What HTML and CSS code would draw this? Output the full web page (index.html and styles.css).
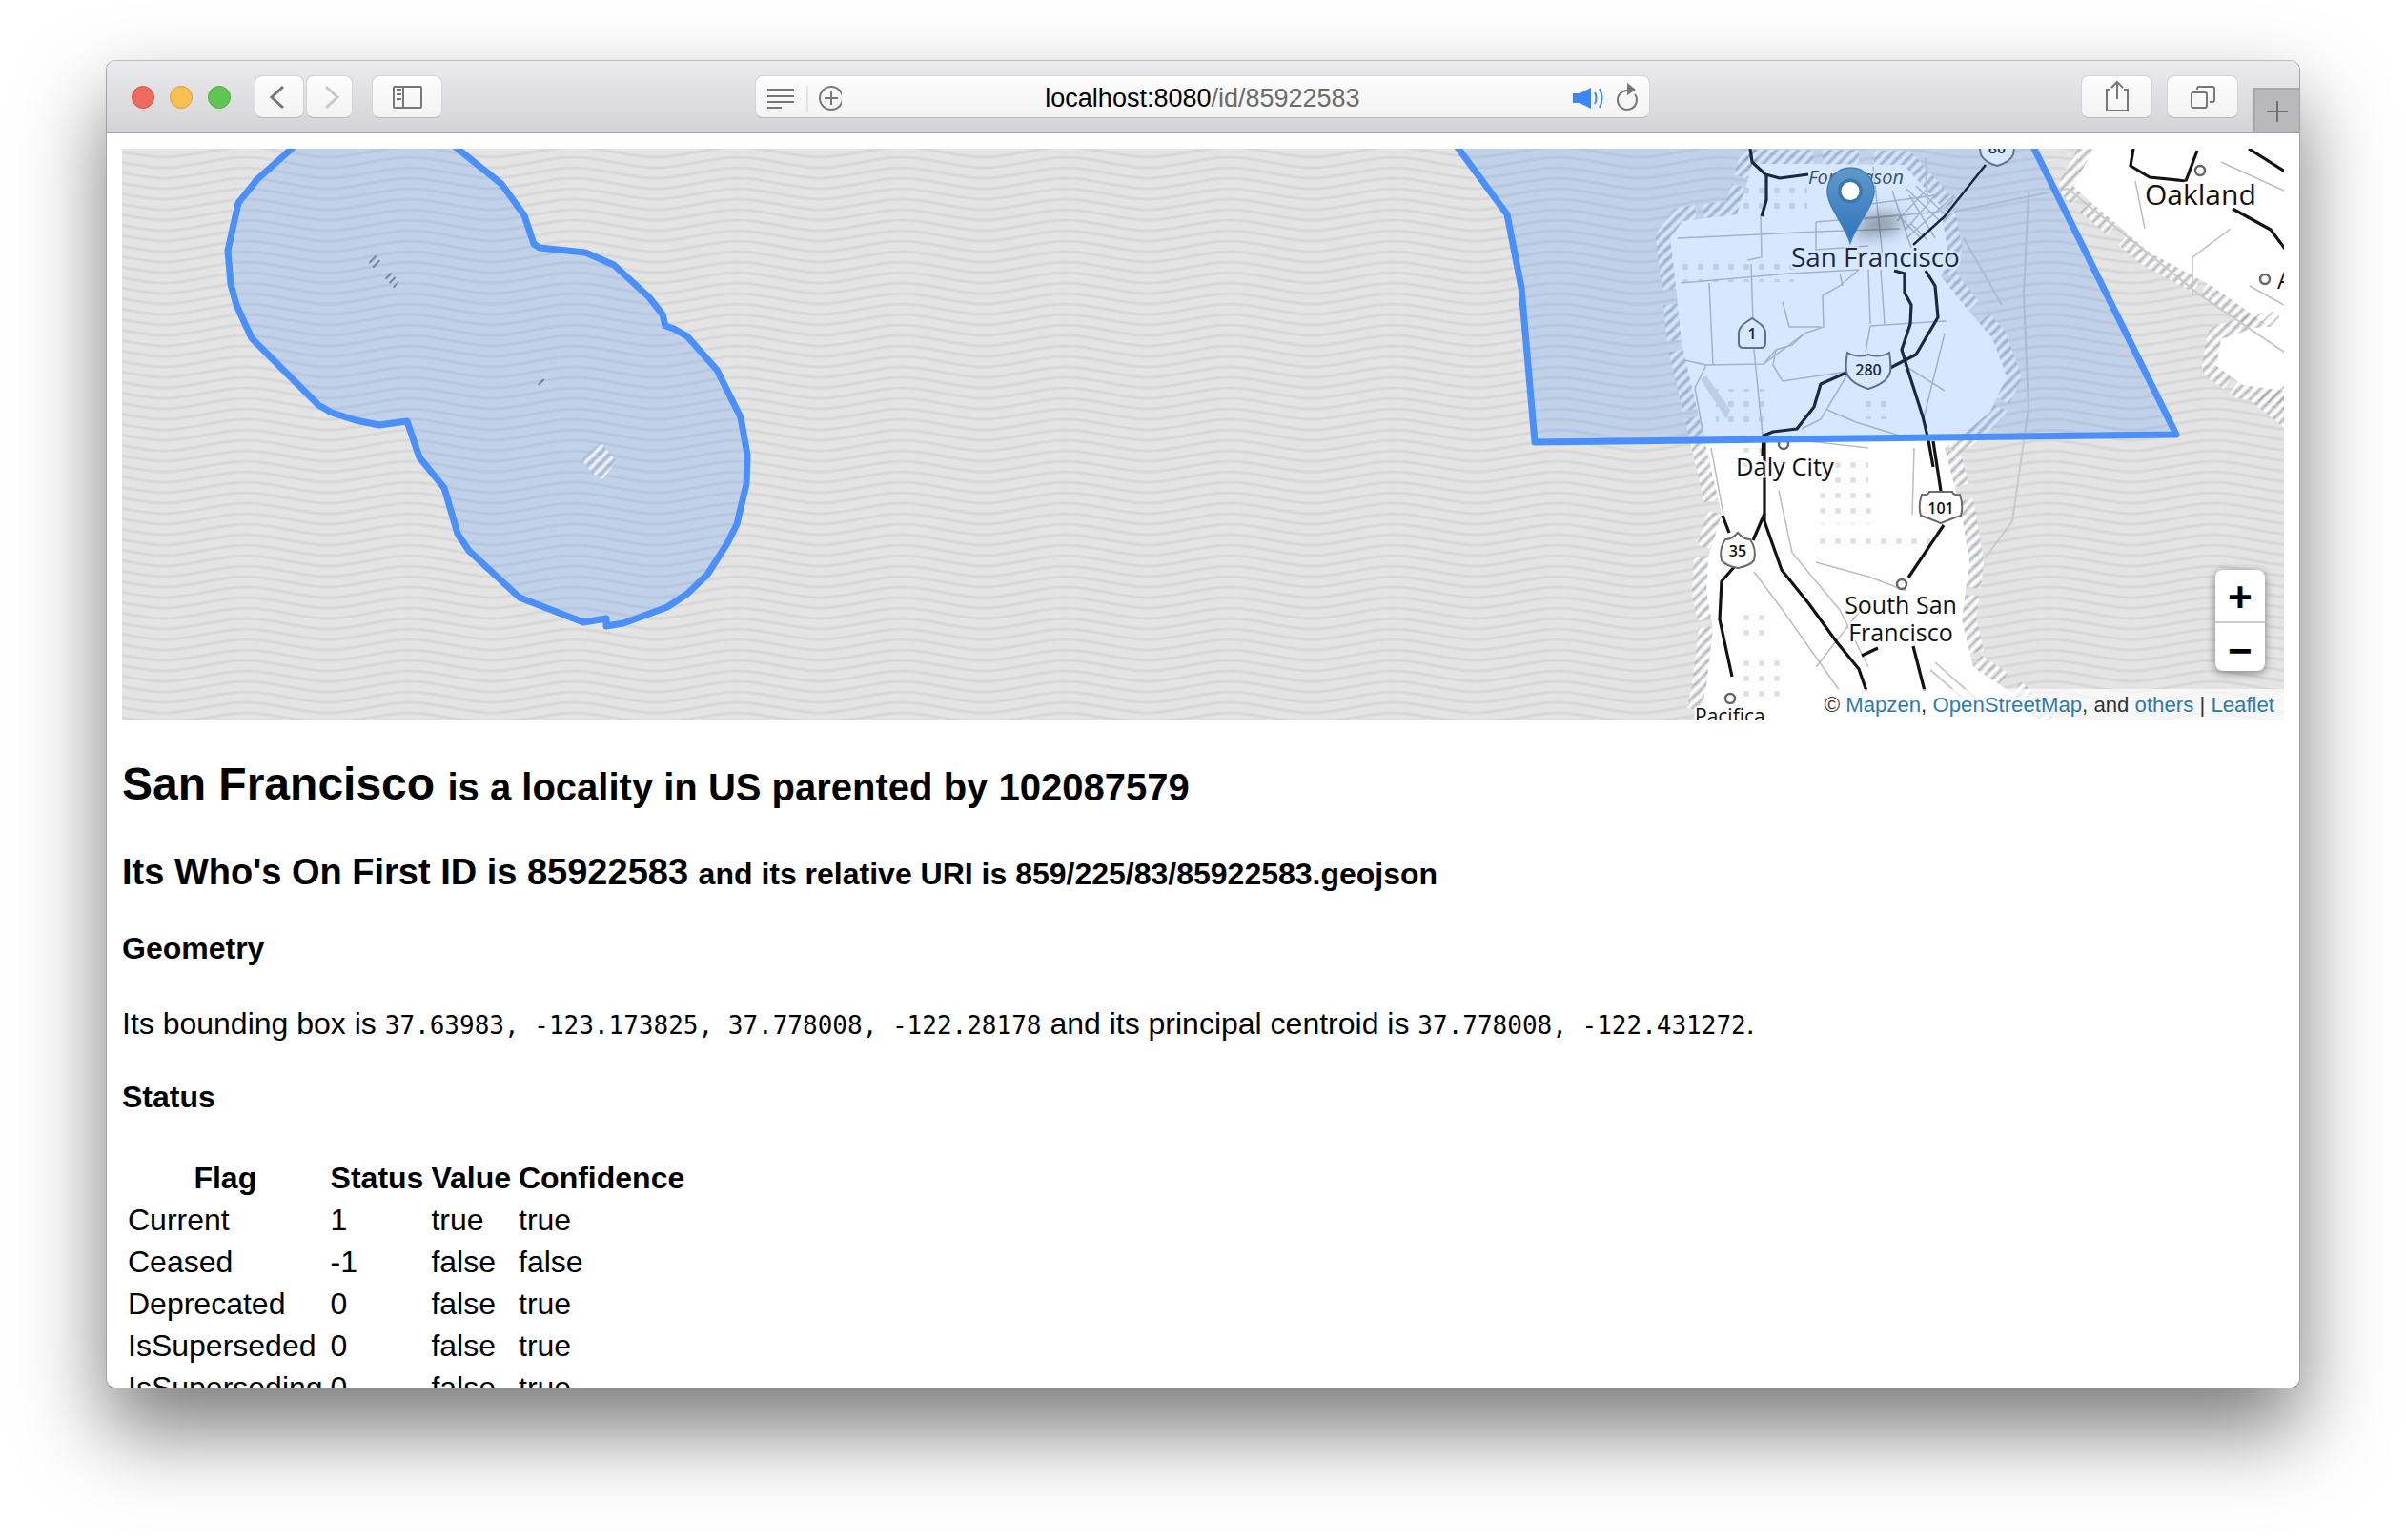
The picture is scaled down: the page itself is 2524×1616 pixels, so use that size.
FILE: index.html
```html
<!DOCTYPE html>
<html lang="en">
<head>
<meta charset="utf-8">
<title>San Francisco</title>
<link rel="stylesheet" href="styles.css">
</head>
<body>
<div class="window">
  <header class="toolbar">
    <div class="lights"><span class="light red"></span><span class="light yellow"></span><span class="light green"></span></div>
    <div class="btn btn-back"><svg width="50" height="43" viewBox="0 0 50 43"><path class="ic-dark" d="M29 11 L17 22 L29 33"/></svg></div>
    <div class="btn btn-forward"><svg width="47" height="43" viewBox="0 0 47 43"><path class="ic-light" d="M20 11 L32 22 L20 33"/></svg></div>
    <div class="btn btn-sidebar"><svg width="72" height="43" viewBox="0 0 72 43"><rect class="ic-thin" x="22" y="11" width="29" height="22" rx="1"/><path class="ic-thin" d="M32 11 V33"/><path class="ic-thin" d="M25 14 H30 M25 19 H30 M25 24 H30"/></svg></div>
    <div class="urlbar">
      <div class="url-left"><svg width="90" height="43" viewBox="0 0 90 43"><path class="ic-thin" d="M12 13 H40 M12 20 H40 M12 26 H40 M12 32 H27"/><path class="ic-sep" d="M54 9 V37"/><circle class="ic-thin" cx="79" cy="22" r="12"/><path class="ic-thin" d="M79 15 V29 M72 22 H86"/></svg></div>
      <div class="url-text"><span class="url-host">localhost:8080</span><span class="url-path">/id/85922583</span></div>
      <div class="url-right"><svg width="90" height="43" viewBox="0 0 90 43"><path class="ic-blue" d="M10 17 H17 L29 11 V33 L17 27 H10 Z"/><path class="ic-wave" d="M33 16 Q36 22 33 28 M38 12 Q43 22 38 32"/><path class="ic-thin" d="M68 14 A10 10 0 1 0 75 18"/><path class="ic-fill" d="M67 6 L76 13 L67 19 Z"/></svg></div>
    </div>
    <div class="btn btn-share"><svg width="73" height="43" viewBox="0 0 73 43"><path class="ic-thin" d="M30 14 H26 V36 H48 V14 H44"/><path class="ic-thin" d="M37 6 V24 M31 12 L37 6 L43 12"/></svg></div>
    <div class="btn btn-tabs"><svg width="73" height="43" viewBox="0 0 73 43"><rect class="ic-thin" x="25" y="17" width="16" height="16" rx="2"/><path class="ic-thin" d="M31 14 V13 Q31 11 33 11 H47 Q49 11 49 13 V25 Q49 27 47 27 H44"/></svg></div>
    <div class="newtab"><svg width="47" height="45" viewBox="0 0 47 45"><path class="ic-plus" d="M23 12 V34 M12 23 H34"/></svg></div>
  </header>

  <main class="page">
    <div class="map">
      <svg class="map-svg" viewBox="128 156 2268 600" width="2268" height="600" role="img" aria-label="Map of San Francisco">
        <defs>
          <pattern id="waves" patternUnits="userSpaceOnUse" width="172" height="11">
            <rect width="172" height="11" fill="#e4e4e4"/>
            <path id="w" class="wave" d="M0 0 C28 0 58 -11 86 -11 S144 0 172 0"/>
            <use href="#w" y="11"/>
            <use href="#w" y="22"/>
          </pattern>
          <pattern id="hatch" patternUnits="userSpaceOnUse" width="8" height="8" patternTransform="rotate(45)">
            <rect width="2.600" height="8" fill="#fff"/>
            <rect x="4.500" width="1.600" height="8" fill="#8f959e" opacity=".6"/>
          </pattern>
          <pattern id="hatchDark" patternUnits="userSpaceOnUse" width="6" height="6" patternTransform="rotate(45)">
            <rect width="2" height="6" fill="#5e6a7c"/>
          </pattern>
          <pattern id="dots" patternUnits="userSpaceOnUse" width="16" height="16">
            <circle cx="8" cy="8" r="3.200" fill="#e0e0e0"/>
          </pattern>
          <linearGradient id="pin" x1="0" y1="0" x2="0" y2="1">
            <stop offset="0" stop-color="#5f9acb"/>
            <stop offset="1" stop-color="#2f73bd"/>
          </linearGradient>
          <filter id="blur" x="-80%" y="-80%" width="260%" height="260%"><feGaussianBlur stdDeviation="9"/></filter>
        </defs>

        <rect x="128" y="156" width="2268" height="600" fill="url(#waves)"/>

        <!-- land, with a broken hatched coast -->
        <g class="coast">
          <path d="M1838 172 L1900 172 L1997 173 L2035 215 L2043 260 L2036 290 L2060 320 L2090 355 L2105 395 L2088 432 L2060 455 L2040 470 L2058 540 L2066 590 L2058 650 L2070 700 L2115 730 L2150 770 L1780 770 L1790 720 L1797 660 L1790 620 L1792 585 L1806 540 L1790 470 L1778 420 L1764 360 L1757 290 L1752 250 L1765 232 L1822 225 L1832 195 Z"/>
          <path d="M2200 150 L2175 195 L2185 205 L2255 265 L2320 300 L2370 335 L2410 360 L2410 150 Z"/>
          <path d="M2330 356 L2365 344 L2410 340 L2410 412 L2353 404 L2325 384 Z"/>
        </g>
        <path class="hatch-only" d="M2360 420 L2400 400 L2400 452 Z"/>
        <path class="hatch-only" d="M1832 156 L1842 156 L1846 176 L1830 176 Z"/>

        <g class="dotted">
          <rect x="1826" y="190" width="70" height="30"/>
          <rect x="1757" y="270" width="125" height="26"/>
          <rect x="1950" y="414" width="30" height="26"/>
          <rect x="1800" y="408" width="60" height="40"/>
          <rect x="1909" y="512" width="54" height="38"/>
          <rect x="1900" y="560" width="125" height="20"/>
          <rect x="1820" y="470" width="40" height="20"/>
          <rect x="1900" y="480" width="60" height="30"/>
          <rect x="1822" y="640" width="30" height="30"/>
          <rect x="1822" y="690" width="48" height="50"/>
        </g>
        <path class="park" d="M1784 398 L1790 394 L1815 430 L1811 440 Z"/>

        <g class="street">
          <path d="M1760 250 L1907 243 L1993 240"/>
          <path d="M1763 297 L1877 287 L1950 283"/>
          <path d="M1833 273 L1848 270 L1847 227"/>
          <path d="M1837 277 L1840 367 L1850 467"/>
          <path d="M1767 378 L1790 383 L1850 382 L1893 350 L1913 343 L1912 310 L1930 300 L1950 283"/>
          <path d="M1790 383 L1778 407 L1787 457"/>
          <path d="M1850 382 L1863 367 L1880 362 L1893 350"/>
          <path d="M1962 342 L2023 338 L2042 337"/>
          <path d="M1962 342 L1957 370"/>
          <path d="M1938 393 L1910 440 L1890 450"/>
          <path d="M2040 350 L2017 443"/>
          <path d="M1793 297 L1797 383"/>
          <path d="M1870 317 L1877 343 L1910 343"/>
          <path d="M1930 287 L1933 300"/>
          <path d="M1960 283 L1962 340"/>
          <path d="M1973 283 L1977 340"/>
          <path d="M1997 383 L2040 410"/>
          <path d="M1863 367 L1860 383 L1870 400 L1937 390"/>
          <path d="M1917 430 L1947 443 L1993 457"/>
          <path d="M1985 200 L2005 260 M2003 205 L2030 250 M1955 215 L2030 205 M1955 230 L2035 222 M2000 250 L2050 205"/>
          <path d="M2000 198 L2035 232 M2010 195 L2040 225 M1990 225 L2015 250 M2005 235 L2022 252 M2020 200 L1990 232 M2030 205 L2000 240"/>
          <path d="M1905 233 L1905 262 L1960 258 M1905 233 L1990 226 M1965 175 L1975 270"/>
          <path d="M1795 470 L1808 540 M1866 515 L1880 580 L1930 640 L1960 700 M1840 600 L1870 640 L1930 725 M1905 590 L1960 605 L2000 620 M1952 640 L1905 700 M1870 460 L1960 470 M2008 470 L2006 540"/>
          <path d="M2240 190 L2250 240 M2340 240 L2300 270 L2300 310 M2360 300 L2396 320 M2330 170 L2396 200"/>
        </g>
        <g class="outer">
          <path d="M2128 202 L2123 309 L2128 428 L2111 547 L2082 586"/>
          <path d="M2050 222 L2169 198 L2307 309 L2400 372"/>
          <path d="M2020 165 L2022 215 M2060 250 L2100 320"/>
          <path d="M2030 695 L2075 735 M2025 703 L2070 742"/>
        </g>
        <g class="road">
          <path d="M1836 156 L1838 170 L1852 183 L1867 187 L1897 183"/>
          <path d="M1853 183 L1853 210 L1848 227"/>
          <path class="thin" d="M2083 173 L2040 227 L2007 257"/>
          <path d="M1987 284 L1998 287 L1998 307 L2005 320 L2004 340 L1995 367 L2002 390 L2017 437 L2023 462 L2028 490"/>
          <path d="M2020 284 L2030 300 L2033 333 L2010 372 L1983 386"/>
          <path d="M1937 391 L1910 403 L1903 427 L1885 450 L1860 453 L1850 457 L1849 478"/>
          <path d="M1851 463 L1851 547 L1869 598 L1898 634 L1927 674 L1950 702 L1958 725"/>
          <path d="M1851 539 L1839 567"/>
          <path d="M1807 541 L1814 559"/>
          <path d="M1820 594 L1806 610 L1804 650 L1817 710"/>
          <path d="M2028 463 L2036 515"/>
          <path d="M2039 551 L2002 606"/>
          <path d="M2007 678 L2019 725"/>
          <path d="M1953 688 L1970 680"/>
          <path d="M2238 156 L2235 174 L2255 186 L2293 190 L2305 158"/>
          <path d="M2359 156 L2400 182"/>
          <path d="M2342 219 L2382 241 L2400 265"/>
        </g>

        <g class="shield">
          <g transform="translate(1838 350)"><path d="M0 -16 C6 -12 14 -8 14 0 V10 Q14 15 9 15 H-9 Q-14 15 -14 10 V0 C-14 -8 -6 -12 0 -16 Z"/><text y="6">1</text></g>
          <g transform="translate(1960 388)"><path d="M-22 -18 Q-12 -12 0 -16 Q12 -12 22 -18 Q24 -6 23 2 Q20 14 0 20 Q-20 14 -23 2 Q-24 -6 -22 -18 Z"/><text y="6">280</text></g>
          <g transform="translate(2095 160)"><path d="M-17 -20 Q-8 -16 0 -18 Q8 -16 17 -20 Q19 -6 17 2 Q14 10 0 14 Q-14 10 -17 2 Q-19 -6 -17 -20 Z"/><text y="1">80</text></g>
          <g transform="translate(2036 533)"><path d="M-20 -14 Q-13 -13 -12 -17 H12 Q13 -13 20 -14 Q24 -2 21 8 Q12 11 0 16 Q-12 11 -21 8 Q-24 -2 -20 -14 Z"/><text y="6">101</text></g>
          <g transform="translate(1823 578)"><path d="M-13 -12 Q-6 -12 0 -19 Q6 -12 13 -12 Q20 -2 17 10 Q12 16 0 18 Q-12 16 -17 10 Q-20 -2 -13 -12 Z"/><text y="6">35</text></g>
        </g>

        <g class="place">
          <circle cx="2308" cy="179" r="5"/><circle cx="2376" cy="293" r="5"/><circle cx="1871" cy="466" r="5"/><circle cx="1995" cy="613" r="5"/><circle cx="1815" cy="733" r="5"/>
        </g>

        <text class="label l-fort" x="1897" y="193">Fort Mason</text>
        <text class="label l-sf" x="1879" y="280">San Francisco</text>
        <text class="label l-oak" x="2250" y="215">Oakland</text>
        <text class="label l-daly" x="1821" y="499">Daly City</text>
        <text class="label l-ssf" x="1994" y="644" text-anchor="middle">South San</text>
        <text class="label l-ssf" x="1994" y="673" text-anchor="middle">Francisco</text>
        <text class="label l-pac" x="1778" y="759">Pacifica</text>
        <text class="label l-ssf" x="2389" y="303">A</text>

        <!-- the two overlays -->
        <path class="overlay" d="M320 140 L306 156 L270 188 L250 213 L239 263 L242 298 L248 320 L264 355 L334 425 L348 433 L373 441 L398 446 L427 442 L440 480 L466 512 L480 560 L492 578 L545 627 L612 653 L636 649 L636 657 L654 654 L700 637 L721 623 L742 603 L763 570 L773 550 L783 508 L784 477 L777 438 L752 388 L721 353 L707 345 L698 342 L695 330 L681 312 L644 278 L614 265 L566 260 L560 256 L550 226 L526 193 L480 156 L463 140 Z"/>
        <path class="overlay" d="M1518 140 L1530 156 L1581 225 L1596 302 L1610 464 L2283 456 L2134 156 L2127 140 Z"/>

        <g class="specks">
          <path d="M391 264 L399 274 L394 284 L387 276 Z"/>
          <path d="M408 283 L418 295 L414 303 L404 292 Z"/>
          <path d="M568 396 L572 399 L566 405 L563 402 Z"/>
          <path class="light-speck" d="M610 482 L630 464 L647 484 L632 503 L622 497 Z"/>
        </g>

        <path class="pin-shadow" d="M1941 250 L1960 225 L1996 225 L1990 243 Z"/>
        <path class="pin" d="M1941 255 C1935 235 1917 217 1917 200.500 A24.500 24.500 0 0 1 1966 200.500 C1966 217 1947 235 1941 255 Z"/>
        <circle class="pin-ring" cx="1941" cy="200.500" r="13"/>
        <circle class="pin-dot" cx="1941" cy="200.500" r="9.500"/>
      </svg>

      <div class="zoom"><span class="zoom-btn">+</span><span class="zoom-btn">−</span></div>
      <div class="attribution">© <a href="#">Mapzen</a>, <a href="#">OpenStreetMap</a>, and <a href="#">others</a> | <a href="#">Leaflet</a></div>
    </div>

    <h2 class="title">San Francisco <small class="sub-h2">is a locality in US parented by 102087579</small></h2>
    <h3 class="subtitle">Its Who's On First ID is 85922583 <small class="sub-h3">and its relative URI is 859/225/83/85922583.geojson</small></h3>
    <h4 class="section">Geometry</h4>
    <p class="para">Its bounding box is <code class="mono">37.63983, -123.173825, 37.778008, -122.28178</code> and its principal centroid is <code class="mono">37.778008, -122.431272</code>.</p>
    <h4 class="section">Status</h4>
    <table class="flags">
      <thead><tr><th>Flag</th><th>Status</th><th>Value</th><th>Confidence</th></tr></thead>
      <tbody>
        <tr><td>Current</td><td>1</td><td>true</td><td>true</td></tr>
        <tr><td>Ceased</td><td>-1</td><td>false</td><td>false</td></tr>
        <tr><td>Deprecated</td><td>0</td><td>false</td><td>true</td></tr>
        <tr><td>IsSuperseded</td><td>0</td><td>false</td><td>true</td></tr>
        <tr><td>IsSuperseding</td><td>0</td><td>false</td><td>true</td></tr>
      </tbody>
    </table>
  </main>
</div>
</body>
</html>
```
FILE: styles.css
```css
* { box-sizing: border-box; }
html, body { margin: 0; padding: 0; background: #fff; }
body { font-family: "Liberation Sans", Arial, sans-serif; color: #000; height: 1616px; overflow: hidden; }

.window {
  margin: 63px 0 0 111px;
  width: 2302px;
  height: 1394px;
  display: flex;
  flex-direction: column;
  border: 1px solid #a2a2a2;
  border-top-color: #bdbdbd;
  border-bottom-color: #777;
  border-radius: 10px;
  overflow: hidden;
  background: #fff;
  box-shadow: 0 44px 88px rgba(0, 0, 0, .52);
}

/* toolbar */
.toolbar {
  flex: none;
  height: 76px;
  padding: 15px 0 0 26px;
  display: flex;
  align-items: flex-start;
  background: linear-gradient(#ebeaec, #d4d3d5);
  border-bottom: 2px solid #a5a5a7;
}
.lights { display: flex; gap: 16px; margin-top: 11px; }
.light { width: 24px; height: 24px; border-radius: 50%; border: 1px solid; }
.red { background: #ee6a5f; border-color: #d5564c; }
.yellow { background: #f6bf50; border-color: #d9a03f; }
.green { background: #61c554; border-color: #50a944; }

.btn, .urlbar {
  height: 45px;
  background: linear-gradient(#fdfdfd, #f3f3f3);
  border: 1px solid #d3d3d3;
  border-bottom-color: #b9b9b9;
  border-radius: 8px;
}
.btn svg, .urlbar svg, .newtab svg { display: block; }
.btn-back { width: 52px; margin-left: 25px; }
.btn-forward { width: 49px; margin-left: 2px; }
.btn-sidebar { width: 74px; margin-left: 20px; }
.btn-share { width: 75px; margin-left: 452px; }
.btn-tabs { width: 75px; margin-left: 15px; }
.newtab {
  width: 48px;
  height: 46px;
  margin-left: 16px;
  align-self: flex-end;
  background: #b9b8ba;
  border-top: 2px solid #a8a8aa;
  border-left: 2px solid #a8a8aa;
}

.urlbar {
  width: 939px;
  margin-left: 328px;
  display: grid;
  grid-template-columns: 1fr auto 1fr;
  align-items: center;
}
.url-right { justify-self: end; }
.url-text { font-size: 27px; line-height: 43px; padding-top: 2px; white-space: nowrap; }
.url-path { color: #6b6b6b; }

.ic-dark, .ic-light, .ic-thin, .ic-sep, .ic-wave, .ic-plus { fill: none; }
.ic-dark { stroke: #777; stroke-width: 3; }
.ic-light { stroke: #c8c8c8; stroke-width: 3; }
.ic-thin { stroke: #777; stroke-width: 2; }
.ic-sep { stroke: #dcdcdc; stroke-width: 1.500; }
.ic-plus { stroke: #6f6f6f; stroke-width: 2; }
.ic-blue { fill: #3f86f5; }
.ic-wave { stroke: #3f86f5; stroke-width: 2; }
.ic-fill { fill: #777; }

/* page */
.page { flex: 1; min-height: 0; padding: 16px 16px 0; overflow: hidden; }

.map { position: relative; height: 600px; overflow: hidden; background: #e4e4e4; }
.map-svg { display: block; }
.wave { fill: none; stroke: #d8d8d8; stroke-width: 3; }
.coast path {
  fill: #fff;
  stroke: url(#hatch);
  stroke-width: 30;
  stroke-linejoin: round;
  stroke-dasharray: 64 10 38 16 90 8;
  paint-order: stroke;
}
.hatch-only { fill: url(#hatch); }
.dotted rect { fill: url(#dots); }
.park { fill: #e0e0e0; }
.street path { fill: none; stroke: #bdbdbd; stroke-width: 1.500; }
.outer path { fill: none; stroke: #c9c9c9; stroke-width: 2; }
.road path { fill: none; stroke: #121212; stroke-width: 3.200; stroke-linejoin: round; }
.road .thin { stroke-width: 2.500; }
.shield path { fill: #fff; stroke: #6a6a6a; stroke-width: 2; }
.shield text { font: 600 16px "Open Sans", sans-serif; text-anchor: middle; fill: #111; }
.place circle { fill: #fff; stroke: #666; stroke-width: 2.500; }
.label {
  font-family: "Open Sans", "Noto Sans", sans-serif;
  fill: #111;
  stroke: rgba(255, 255, 255, .85);
  stroke-width: 5px;
  paint-order: stroke;
  stroke-linejoin: round;
}
.l-sf { font-size: 27.800px; }
.l-daly { font-size: 25.500px; }
.l-oak { font-size: 30px; }
.l-ssf { font-size: 25px; }
.l-pac { font-size: 21px; }
.l-fort { font-size: 20px; font-style: italic; fill: #444; stroke-width: 3px; }

.overlay {
  fill: rgba(51, 136, 255, .2);
  stroke: #4a8ffa;
  stroke-width: 7;
  stroke-linejoin: round;
  stroke-linecap: round;
}
.specks path { fill: url(#hatchDark); opacity: .75; }
.specks .light-speck { fill: url(#hatch); opacity: .8; }
.pin-shadow { fill: rgba(0, 0, 0, .38); filter: url(#blur); }
.pin { fill: url(#pin); stroke: #3f7fb8; stroke-width: 1.500; }
.pin-ring { fill: #3d76ad; }
.pin-dot { fill: #fff; }

.zoom {
  position: absolute;
  top: 442px;
  left: 2196px;
  width: 52px;
  height: 106px;
  display: flex;
  flex-direction: column;
  background: #fff;
  border-radius: 8px;
  box-shadow: 0 2px 10px rgba(0, 0, 0, .45);
}
.zoom-btn {
  flex: 1 1 0;
  padding-top: 10px;
  display: flex;
  align-items: center;
  justify-content: center;
  font: bold 44px/1 "Liberation Mono", monospace;
}
.zoom-btn + .zoom-btn { border-top: 2px solid #ccc; }

.attribution {
  position: absolute;
  right: 0;
  bottom: 0;
  height: 33px;
  padding: 0 10px;
  font-size: 22.200px;
  line-height: 33px;
  color: #333;
  background: rgba(255, 255, 255, .7);
  white-space: nowrap;
}
.attribution a { color: #2f7aa8; text-decoration: none; }

/* text */
.title { margin: 40px 0 42px; font-size: 48px; line-height: 54px; font-weight: bold; }
.sub-h2 { font-size: 40px; position: relative; top: 1px; }
.subtitle { margin: 0 0 39px; font-size: 38px; line-height: 42px; font-weight: bold; }
.sub-h3 { font-size: 32px; }
.section { margin: 39px 0 43px; font-size: 32px; line-height: 36px; font-weight: bold; }
.para { margin: 0; font-size: 32px; line-height: 36px; }
.mono { font-family: "DejaVu Sans Mono", monospace; font-size: 26px; }

.flags { border-collapse: separate; border-spacing: 4px; font-size: 32px; line-height: 36px; }
.flags th, .flags td { padding: 2px; }
.flags td { text-align: left; }
```
